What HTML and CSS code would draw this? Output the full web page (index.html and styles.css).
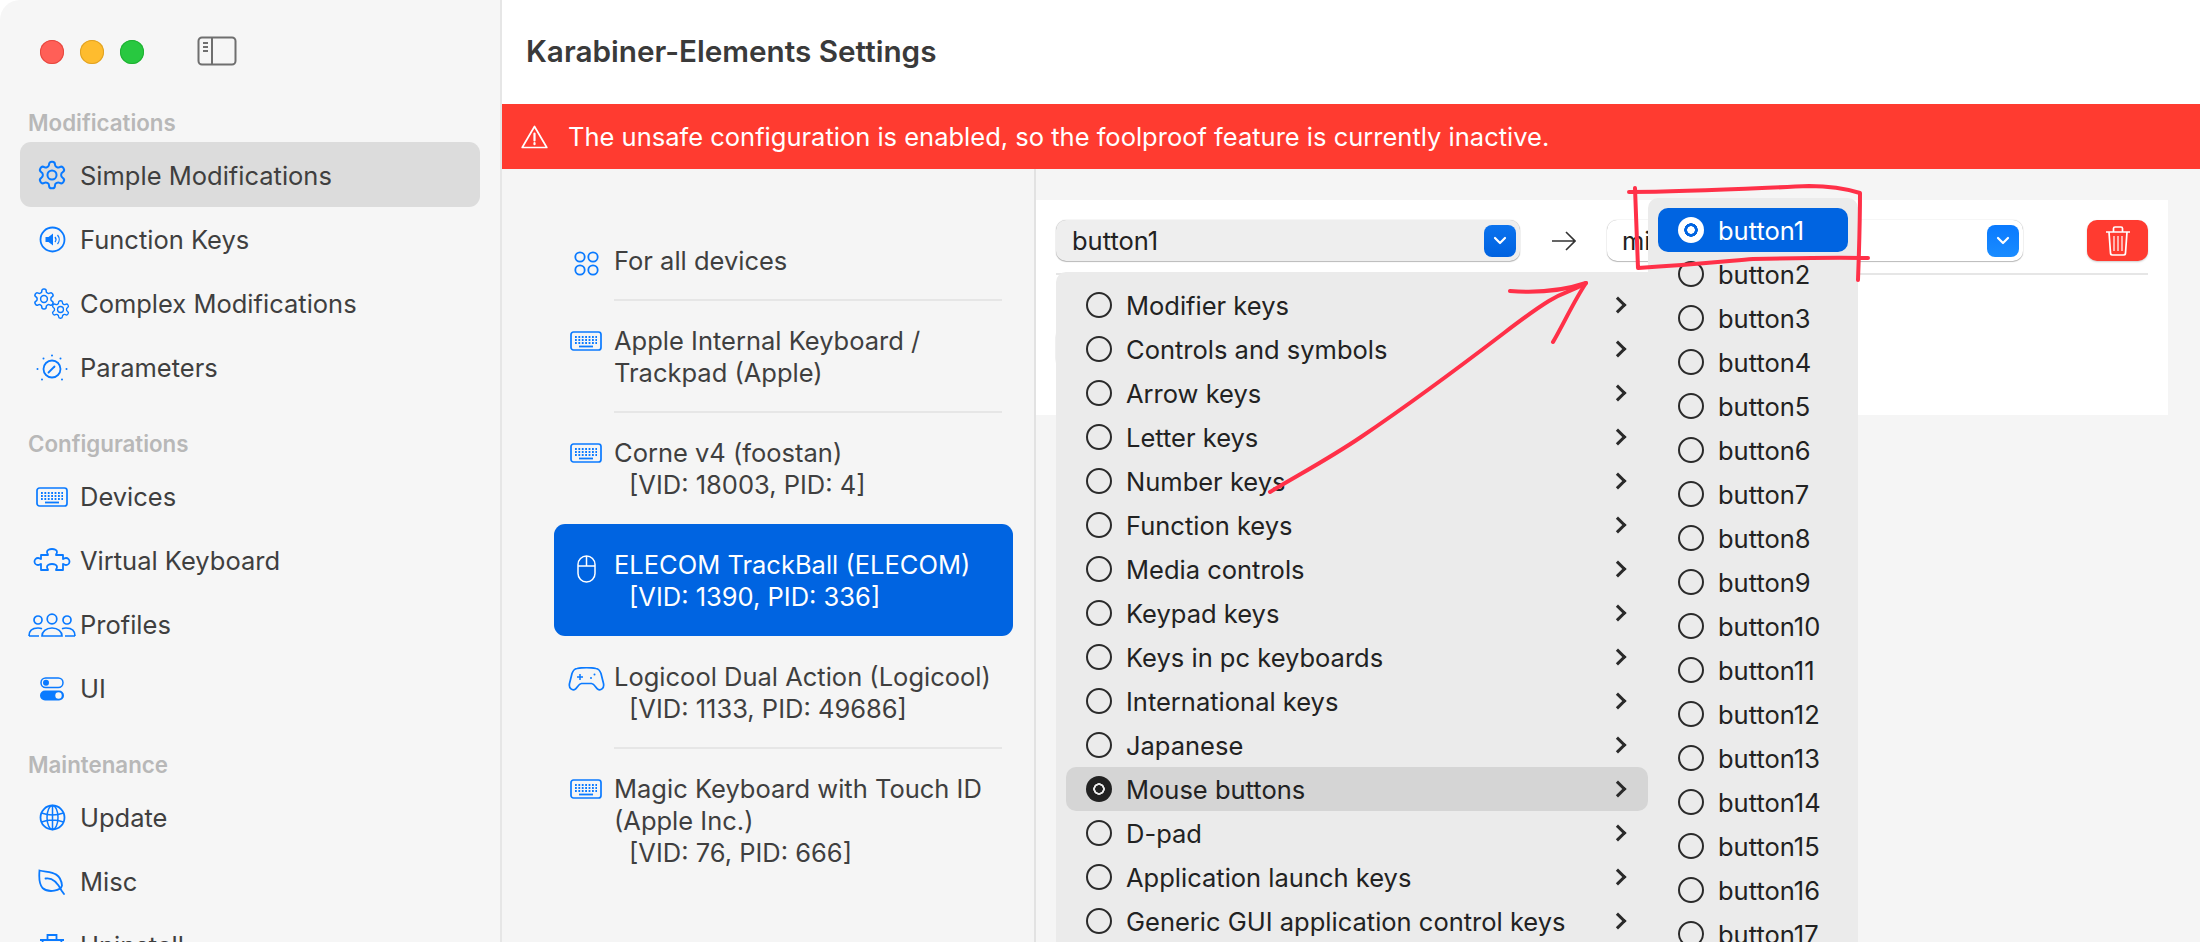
FILE: index.html
```html
<!doctype html>
<html lang="en-US">
  <head>
    <meta charset="utf-8">
    <meta name="viewport" content="width=device-width, initial-scale=1">
    <title>Karabiner-Elements Settings</title>
    <link rel="stylesheet" href="styles.css">
  </head>
  <body>
    <svg class="sprite" width="0" height="0">
      <symbol id="i-gear" viewBox="0 0 24 24">
        <path d="M12.22 2h-.44a2 2 0 0 0-2 2v.18a2 2 0 0 1-1 1.73l-.43.25a2 2 0 0 1-2 0l-.15-.08a2 2 0 0 0-2.73.73l-.22.38a2 2 0 0 0 .73 2.73l.15.1a2 2 0 0 1 1 1.72v.51a2 2 0 0 1-1 1.74l-.15.09a2 2 0 0 0-.73 2.73l.22.38a2 2 0 0 0 2.73.73l.15-.08a2 2 0 0 1 2 0l.43.25a2 2 0 0 1 1 1.73V20a2 2 0 0 0 2 2h.44a2 2 0 0 0 2-2v-.18a2 2 0 0 1 1-1.73l.43-.25a2 2 0 0 1 2 0l.15.08a2 2 0 0 0 2.73-.73l.22-.39a2 2 0 0 0-.73-2.73l-.15-.08a2 2 0 0 1-1-1.74v-.5a2 2 0 0 1 1-1.74l.15-.09a2 2 0 0 0 .73-2.73l-.22-.38a2 2 0 0 0-2.73-.73l-.15.08a2 2 0 0 1-2 0l-.43-.25a2 2 0 0 1-1-1.73V4a2 2 0 0 0-2-2z" fill="none" stroke="currentColor" stroke-width="1.500"/>
        <circle cx="12" cy="12" r="3.400" fill="none" stroke="currentColor" stroke-width="1.500"/>
      </symbol>
      <symbol id="i-keyboard" viewBox="0 0 32 20">
        <rect x="1" y="1" width="30" height="18" rx="2.500" fill="none" stroke="currentColor" stroke-width="1.700"/>
        <path d="M5 6h22M5 9h22M5 12h22" stroke="currentColor" stroke-width="1.800" stroke-dasharray="1.800 1.600" fill="none"/>
        <path d="M9 15.500h14" stroke="currentColor" stroke-width="1.800" fill="none"/>
      </symbol>
    </svg>

    <div class="window">
      <aside class="sidebar">
        <div class="titlebar">
          <span class="light light-red"></span>
          <span class="light light-yellow"></span>
          <span class="light light-green"></span>
          <svg class="toggle" width="40" height="30" viewBox="0 0 40 30" fill="none" stroke="#6f6f6f" stroke-width="2">
            <rect x="1.500" y="1.500" width="37" height="27" rx="3.500"/>
            <path d="M15 1.500v27"/>
            <path d="M6 7h5M6 11h5M6 15h5" stroke-width="1.800"/>
          </svg>
        </div>

        <h2 class="nav-label">Modifications</h2>
        <a class="nav-item active">
          <span class="nav-icon"><svg width="32" height="32"><use href="#i-gear"/></svg></span>Simple Modifications
        </a>
        <a class="nav-item">
          <span class="nav-icon">
            <svg width="27" height="27" viewBox="0 0 27 27" fill="none" stroke="currentColor" stroke-width="1.800">
              <circle cx="13.500" cy="13.500" r="12"/>
              <path d="M6.500 11h3l4.500-3.500v12L9.500 16h-3z" fill="currentColor" stroke="none"/>
              <path d="M16 11a4 4 0 0 1 0 5M18.500 9a7 7 0 0 1 0 9" stroke-width="1.300"/>
            </svg>
          </span>Function Keys
        </a>
        <a class="nav-item">
          <span class="nav-icon">
            <svg class="icon-free" width="36" height="30" viewBox="0 0 36 30">
              <use href="#i-gear" x="-2" y="-2" width="24" height="24"/>
              <use href="#i-gear" x="16" y="10" width="21" height="21"/>
            </svg>
          </span>Complex Modifications
        </a>
        <a class="nav-item">
          <span class="nav-icon">
            <svg width="32" height="28" viewBox="0 0 32 28" fill="none" stroke="currentColor" stroke-width="1.800">
              <circle cx="16" cy="15" r="8.500"/>
              <path d="M12.500 18.500 18.500 12.500" stroke-linecap="round"/>
              <path d="M16 1.500v.1M7.500 4.500v.1M24.500 4.500v.1M1.500 15v.1M30.500 15v.1M6 25.500v.1M26 25.500v.1" stroke-linecap="round" stroke-width="2"/>
            </svg>
          </span>Parameters
        </a>

        <h2 class="nav-label nav-label-2">Configurations</h2>
        <a class="nav-item">
          <span class="nav-icon"><svg width="32" height="20"><use href="#i-keyboard"/></svg></span>Devices
        </a>
        <a class="nav-item">
          <span class="nav-icon">
            <svg width="38" height="25" viewBox="0 -1 38 25" fill="none" stroke="currentColor" stroke-width="1.800" stroke-linejoin="round">
              <path d="M8 6h7c0-1-1-1.500-1-3a5 3 0 0 1 10 0c0 1.500-1 2-1 3h7v4c1 0 1.500-1 3-1a3.500 3.500 0 0 1 0 7c-1.500 0-2-1-3-1v6h-7c0-1 1-1.500 1-3a5 3 0 0 0-10 0c0 1.500 1 2 1 3H8v-6c-1 0-1.500 1-3 1a3.500 3.500 0 0 1 0-7c1.500 0 2 1 3 1z"/>
            </svg>
          </span>Virtual Keyboard
        </a>
        <a class="nav-item">
          <span class="nav-icon">
            <svg width="48" height="24" viewBox="0 0 48 24" fill="none" stroke="currentColor" stroke-width="1.700">
              <circle cx="10" cy="7" r="4"/>
              <circle cx="24" cy="6" r="4.800"/>
              <circle cx="39" cy="7" r="4"/>
              <path d="M1 23c0-5 3-8 9-8 2 0 3 .3 4 .8M47 23c0-5-3-8-9-8-2 0-3 .3-4 .8M1 23h10M37 23h10"/>
              <path d="M14 23c0-4.500 4-8 10-8s10 3.500 10 8z"/>
            </svg>
          </span>Profiles
        </a>
        <a class="nav-item">
          <span class="nav-icon">
            <svg width="24" height="24" viewBox="0 0 24 24">
              <rect x="1" y="1" width="22" height="9.500" rx="4.700" fill="none" stroke="currentColor" stroke-width="1.500"/>
              <circle cx="6" cy="5.700" r="3" fill="currentColor"/>
              <rect x="0" y="13.500" width="24" height="10" rx="5" fill="currentColor"/>
              <circle cx="18.500" cy="18.500" r="3.200" fill="#f6f6f6"/>
            </svg>
          </span>UI
        </a>

        <h2 class="nav-label nav-label-3">Maintenance</h2>
        <a class="nav-item">
          <span class="nav-icon">
            <svg width="27" height="27" viewBox="0 0 27 27" fill="none" stroke="currentColor" stroke-width="1.500">
              <circle cx="13.500" cy="13.500" r="12" stroke-width="1.800"/>
              <ellipse cx="13.500" cy="13.500" rx="5.500" ry="12"/>
              <path d="M2.500 9c7 2.500 15 2.500 22 0M2.500 18c7-2.500 15-2.500 22 0M13.500 1.500v24"/>
            </svg>
          </span>Update
        </a>
        <a class="nav-item">
          <span class="nav-icon">
            <svg width="28" height="26" viewBox="0 0 28 26" fill="none" stroke="currentColor" stroke-width="1.800" stroke-linecap="round">
              <path d="M1.500 1.500c9 2.500 21 0 22.500 15-1 5-13 8-19.500 2.500C1.500 15.500 1 7 1.500 1.500z"/>
              <path d="M7.500 9.500c5-1 11 2 16 12l2.500 3.500"/>
            </svg>
          </span>Misc
        </a>
        <a class="nav-item">
          <span class="nav-icon">
            <svg width="26" height="26" viewBox="0 0 26 26" fill="none" stroke="currentColor" stroke-width="1.800">
              <path d="M1 7h24M8.500 7V2h9v5M3.500 7l1.500 17h16l1.500-17M9 11v9M13 11v9M17 11v9"/>
            </svg>
          </span>Uninstall
        </a>
      </aside>

      <main class="main">
        <header class="main-header">Karabiner-Elements Settings</header>
        <div class="banner">
          <svg width="27" height="24" viewBox="0 0 27 24" fill="none" stroke="#fff" stroke-width="1.700" stroke-linejoin="round">
            <path d="M13.500 1.500 1.200 22.500h24.600z"/>
            <path d="M13.500 8.500v7M13.500 18v1.200" stroke-width="2.200" stroke-linecap="round"/>
          </svg>
          <span>The unsafe configuration is enabled, so the foolproof feature is currently inactive.</span>
        </div>

        <div class="main-body">
          <section class="devices">
            <div class="device">
              <span class="device-icon">
                <svg width="25" height="25" viewBox="0 0 25 25" fill="none" stroke="currentColor" stroke-width="1.800">
                  <circle cx="6" cy="6" r="4.700"/><circle cx="19" cy="6" r="4.700"/>
                  <circle cx="6" cy="19" r="4.700"/><circle cx="19" cy="19" r="4.700"/>
                </svg>
              </span>
              <div>For all devices</div>
            </div>
            <div class="device-sep"></div>
            <div class="device">
              <span class="device-icon"><svg width="32" height="20"><use href="#i-keyboard"/></svg></span>
              <div>Apple Internal Keyboard /<br>Trackpad (Apple)</div>
            </div>
            <div class="device-sep"></div>
            <div class="device">
              <span class="device-icon"><svg width="32" height="20"><use href="#i-keyboard"/></svg></span>
              <div>Corne v4 (foostan)<div class="device-ids">[VID: 18003, PID: 4]</div></div>
            </div>
            <div class="device selected">
              <span class="device-icon">
                <svg width="19" height="28" viewBox="0 0 19 28" fill="none" stroke="currentColor" stroke-width="1.500">
                  <rect x="1" y="1" width="17" height="26" rx="8.500"/>
                  <path d="M1 11h17M9.500 1v10"/>
                </svg>
              </span>
              <div>ELECOM TrackBall (ELECOM)<div class="device-ids">[VID: 1390, PID: 336]</div></div>
            </div>
            <div class="device">
              <span class="device-icon">
                <svg width="37" height="24" viewBox="0 0 37 24" fill="none" stroke="currentColor" stroke-width="1.700" stroke-linejoin="round">
                  <path d="M9 1.500c5-1 14-1 19 0 3 .5 4 2 5 5l2.500 10c1 5-3 7.500-6 5.500-2-1.500-3-5-6-5.500h-10c-3 .5-4 4-6 5.500-3 2-7-.5-6-5.500L4 6.500c1-3 2-4.500 5-5z"/>
                  <path d="M12 7v6M9 10h6" stroke-width="1.500"/>
                  <circle cx="26.500" cy="7.500" r="1" fill="currentColor" stroke="none"/>
                  <circle cx="23" cy="11" r="1" fill="currentColor" stroke="none"/>
                </svg>
              </span>
              <div>Logicool Dual Action (Logicool)<div class="device-ids">[VID: 1133, PID: 49686]</div></div>
            </div>
            <div class="device-sep"></div>
            <div class="device">
              <span class="device-icon"><svg width="32" height="20"><use href="#i-keyboard"/></svg></span>
              <div>Magic Keyboard with Touch ID<br>(Apple Inc.)<div class="device-ids">[VID: 76, PID: 666]</div></div>
            </div>
          </section>

          <section class="panel-col">
            <div class="panel">
              <div class="rule-row">
                <div class="select select-open">
                  <span>button1</span>
                  <span class="select-btn">
                    <svg width="14" height="9" viewBox="0 0 14 9" fill="none" stroke="#fff" stroke-width="2.200" stroke-linecap="round" stroke-linejoin="round"><path d="M2 2l5 5 5-5"/></svg>
                  </span>
                </div>
                <span class="rule-arrow">
                  <svg width="24" height="20" viewBox="0 0 24 20" fill="none" stroke="#333" stroke-width="1.600"><path d="M0 10h23M14 1l9 9-9 9"/></svg>
                </span>
                <div class="select select-to">
                  <span>mi</span>
                  <span class="select-btn">
                    <svg width="14" height="9" viewBox="0 0 14 9" fill="none" stroke="#fff" stroke-width="2.200" stroke-linecap="round" stroke-linejoin="round"><path d="M2 2l5 5 5-5"/></svg>
                  </span>
                </div>
                <button class="trash">
                  <svg width="24" height="30" viewBox="0 0 24 30" fill="none" stroke="#fff" stroke-width="1.700">
                    <path d="M0 6h24M7.500 6V2.500c0-1 .5-1.500 1.500-1.500h6c1 0 1.500.5 1.500 1.500V6M3 6l1.500 21c0 1 1 2 2 2h11c1 0 2-1 2-2L21 6"/>
                    <path d="M8 10v15M12 10v15M16 10v15" stroke-width="1.200"/>
                  </svg>
                </button>
              </div>
              <div class="select select-behind"></div>

              <div class="menu">
                <div class="menu-row"><span class="radio"></span>Modifier keys<span class="chev"></span></div>
                <div class="menu-row"><span class="radio"></span>Controls and symbols<span class="chev"></span></div>
                <div class="menu-row"><span class="radio"></span>Arrow keys<span class="chev"></span></div>
                <div class="menu-row"><span class="radio"></span>Letter keys<span class="chev"></span></div>
                <div class="menu-row"><span class="radio"></span>Number keys<span class="chev"></span></div>
                <div class="menu-row"><span class="radio"></span>Function keys<span class="chev"></span></div>
                <div class="menu-row"><span class="radio"></span>Media controls<span class="chev"></span></div>
                <div class="menu-row"><span class="radio"></span>Keypad keys<span class="chev"></span></div>
                <div class="menu-row"><span class="radio"></span>Keys in pc keyboards<span class="chev"></span></div>
                <div class="menu-row"><span class="radio"></span>International keys<span class="chev"></span></div>
                <div class="menu-row"><span class="radio"></span>Japanese<span class="chev"></span></div>
                <div class="menu-row open"><span class="radio on"></span>Mouse buttons<span class="chev"></span></div>
                <div class="menu-row"><span class="radio"></span>D-pad<span class="chev"></span></div>
                <div class="menu-row"><span class="radio"></span>Application launch keys<span class="chev"></span></div>
                <div class="menu-row"><span class="radio"></span>Generic GUI application control keys<span class="chev"></span></div>
              </div>

              <div class="submenu">
                <div class="menu-row current"><span class="radio on"></span>button1</div>
                <div class="menu-row"><span class="radio"></span>button2</div>
                <div class="menu-row"><span class="radio"></span>button3</div>
                <div class="menu-row"><span class="radio"></span>button4</div>
                <div class="menu-row"><span class="radio"></span>button5</div>
                <div class="menu-row"><span class="radio"></span>button6</div>
                <div class="menu-row"><span class="radio"></span>button7</div>
                <div class="menu-row"><span class="radio"></span>button8</div>
                <div class="menu-row"><span class="radio"></span>button9</div>
                <div class="menu-row"><span class="radio"></span>button10</div>
                <div class="menu-row"><span class="radio"></span>button11</div>
                <div class="menu-row"><span class="radio"></span>button12</div>
                <div class="menu-row"><span class="radio"></span>button13</div>
                <div class="menu-row"><span class="radio"></span>button14</div>
                <div class="menu-row"><span class="radio"></span>button15</div>
                <div class="menu-row"><span class="radio"></span>button16</div>
                <div class="menu-row"><span class="radio"></span>button17</div>
              </div>
            </div>
          </section>
        </div>
      </main>

      <!-- hand drawn markup on top of the screenshot -->
      <svg class="ink" width="2200" height="942" viewBox="0 0 2200 942" fill="none" stroke="#ff3048" stroke-width="4" stroke-linecap="round" stroke-linejoin="round">
        <path d="M1270 492C1300 474 1330 458 1361 437S1440 382 1504 333 1560 298 1586 283"/>
        <path d="M1510 291c25 2 52 0 76-8-12 18-22 40-33 59"/>
        <path d="M1629 192c60 0 110-3 180-6 20 0 35 2 51 7 0 30-1 60-2 87"/>
        <path d="M1635 188c1 25 2 55 3 80 50-3 80-6 115-9 40-1 80-2 115-1"/>
      </svg>
    </div>
  </body>
</html>
```

FILE: styles.css
```css
* {
  box-sizing: border-box;
}
body {
  background: #fff;
  color: #3f3f3f;
  font-family: Inter, "Noto Sans", sans-serif;
  font-size: 25.5px;
  margin: 0;
}
.sprite {
  position: absolute;
}
.window {
  background: #fff;
  display: flex;
  height: 942px;
  overflow: hidden;
  position: relative;
  width: 2200px;
}

/* sidebar */
.sidebar {
  background: #f6f6f6;
  border-right: 2px solid #e6e6e6;
  border-top-left-radius: 20px;
  flex: none;
  padding: 0 20px;
  width: 502px;
}
.titlebar {
  align-items: center;
  display: flex;
  gap: 16px;
  height: 104px;
  padding: 0 0 0 20px;
}
.light {
  border-radius: 50%;
  height: 24px;
  width: 24px;
}
.light-red {
  background: #ff5f57;
  box-shadow: inset 0 0 0 1px #e5483f;
}
.light-yellow {
  background: #febc2e;
  box-shadow: inset 0 0 0 1px #e0a224;
}
.light-green {
  background: #28c840;
  box-shadow: inset 0 0 0 1px #1fb132;
}
.toggle {
  margin-left: 37px;
  margin-top: -2px;
}
.nav-label {
  color: #b8b8b8;
  font-size: 22.3px;
  font-weight: 600;
  height: 38px;
  line-height: 38px;
  margin: 0;
  padding-left: 8px;
}
.nav-label-2 {
  margin-top: 27px;
}
.nav-label-3 {
  margin-top: 27px;
}
.nav-item {
  align-items: center;
  border-radius: 11px;
  display: flex;
  gap: 4px;
  height: 64px;
  padding: 3px 0 0 8px;
}
.nav-item.active {
  background: #dcdcdc;
  height: 65px;
  margin-bottom: -1px;
  padding-top: 1px;
}
.nav-icon {
  align-items: center;
  color: #0a7aff;
  display: flex;
  flex: none;
  justify-content: center;
  width: 48px;
}
.icon-free {
  overflow: visible;
}

/* main column */
.main {
  background: #f5f5f5;
  display: flex;
  flex: 1;
  flex-direction: column;
  min-width: 0;
}
.main-header {
  align-items: center;
  background: #fff;
  color: #3a3a3a;
  display: flex;
  flex: none;
  font-size: 29.7px;
  font-weight: 600;
  height: 104px;
  padding: 0 0 2px 24px;
}
.banner {
  align-items: center;
  background: #ff3b30;
  color: #fff;
  display: flex;
  flex: none;
  gap: 20px;
  height: 65px;
  padding-left: 19px;
}
.main-body {
  display: flex;
  flex: 1;
  min-height: 0;
}

/* device list */
.devices {
  flex: none;
  padding: 51px 21px 0 52px;
  width: 532px;
}
.device {
  border-radius: 11px;
  display: flex;
  gap: 7px;
  line-height: 32px;
  padding: 25px 12px 23px 11px;
}
.device-icon {
  color: #0a7aff;
  display: flex;
  flex: none;
  justify-content: center;
  padding-top: 6px;
  width: 42px;
}
.device-ids {
  padding-left: 15px;
}
.device-sep {
  background: #e6e6e6;
  height: 2px;
  margin: -1px 11px -1px 60px;
}
.device.selected {
  background: #0064e1;
  color: #fff;
}
.device.selected .device-icon {
  color: #fff;
}

/* rule panel */
.panel-col {
  border-left: 2px solid #e2e2e2;
  flex: 1;
  padding: 31px 32px 0 0;
}
.panel {
  background: #fff;
  height: 215px;
  padding: 20px;
  position: relative;
}
.rule-row {
  align-items: center;
  border-bottom: 2px solid #e6e6e6;
  color: #222;
  display: flex;
  padding-bottom: 12px;
}
.select {
  align-items: center;
  border-radius: 10px;
  box-shadow: 0 0 1px rgba(0, 0, 0, .35), 0 1px 1px rgba(0, 0, 0, .25);
  display: flex;
  flex: none;
  height: 41px;
  justify-content: space-between;
  padding: 0 4px 0 16px;
}
.select-open {
  background: #eee;
  width: 464px;
}
.select-to {
  background: #fff;
  padding-left: 15px;
  width: 416px;
}
.select-behind {
  background: #fff;
  margin-top: 52px;
  width: 464px;
}
.select-btn {
  align-items: center;
  background: linear-gradient(#0a72ee, #0062e0);
  border-radius: 8px;
  display: flex;
  height: 32px;
  justify-content: center;
  width: 32px;
}
.select-to .select-btn {
  background: linear-gradient(#0a7aff, #1a8cff);
}
.rule-arrow {
  display: flex;
  flex: none;
  justify-content: center;
  width: 87px;
}
.trash {
  align-items: center;
  background: #ff3b30;
  border: 0;
  border-radius: 10px;
  box-shadow: 0 1px 2px rgba(0, 0, 0, .2);
  display: flex;
  flex: none;
  height: 41px;
  justify-content: center;
  margin-left: 64px;
  padding: 0;
  width: 61px;
}

/* popup menus */
.menu,
.submenu {
  background: #ebebeb;
  color: #222;
  position: absolute;
}
.menu {
  border-top-left-radius: 10px;
  left: 20px;
  padding: 11px 0 0 10px;
  top: 72px;
  width: 592px;
}
.submenu {
  border-radius: 10px 10px 0 0;
  left: 612px;
  padding: 10px;
  top: -2px;
  width: 210px;
}
.menu-row {
  align-items: center;
  border-radius: 10px;
  display: flex;
  gap: 14px;
  height: 44px;
  padding-left: 20px;
  position: relative;
  white-space: nowrap;
}
.menu-row.open {
  background: #d5d5d5;
}
.menu-row.current {
  background: #0064e1;
  color: #fff;
}
.radio {
  border: 2px solid #2a2a2a;
  border-radius: 50%;
  flex: none;
  height: 26px;
  width: 26px;
}
.radio.on {
  background: radial-gradient(circle, #222 0 3.5px, #ebebeb 4px 5.5px, #222 6px);
  border: 0;
}
.current .radio.on {
  background: radial-gradient(circle, #fff 0 3.5px, #0064e1 4px 6.5px, #fff 7px);
}
.chev {
  border-right: 3px solid #2a2a2a;
  border-top: 3px solid #2a2a2a;
  height: 12px;
  position: absolute;
  right: 24px;
  transform: rotate(45deg);
  width: 12px;
}
.ink {
  left: 0;
  pointer-events: none;
  position: absolute;
  top: 0;
}
```
